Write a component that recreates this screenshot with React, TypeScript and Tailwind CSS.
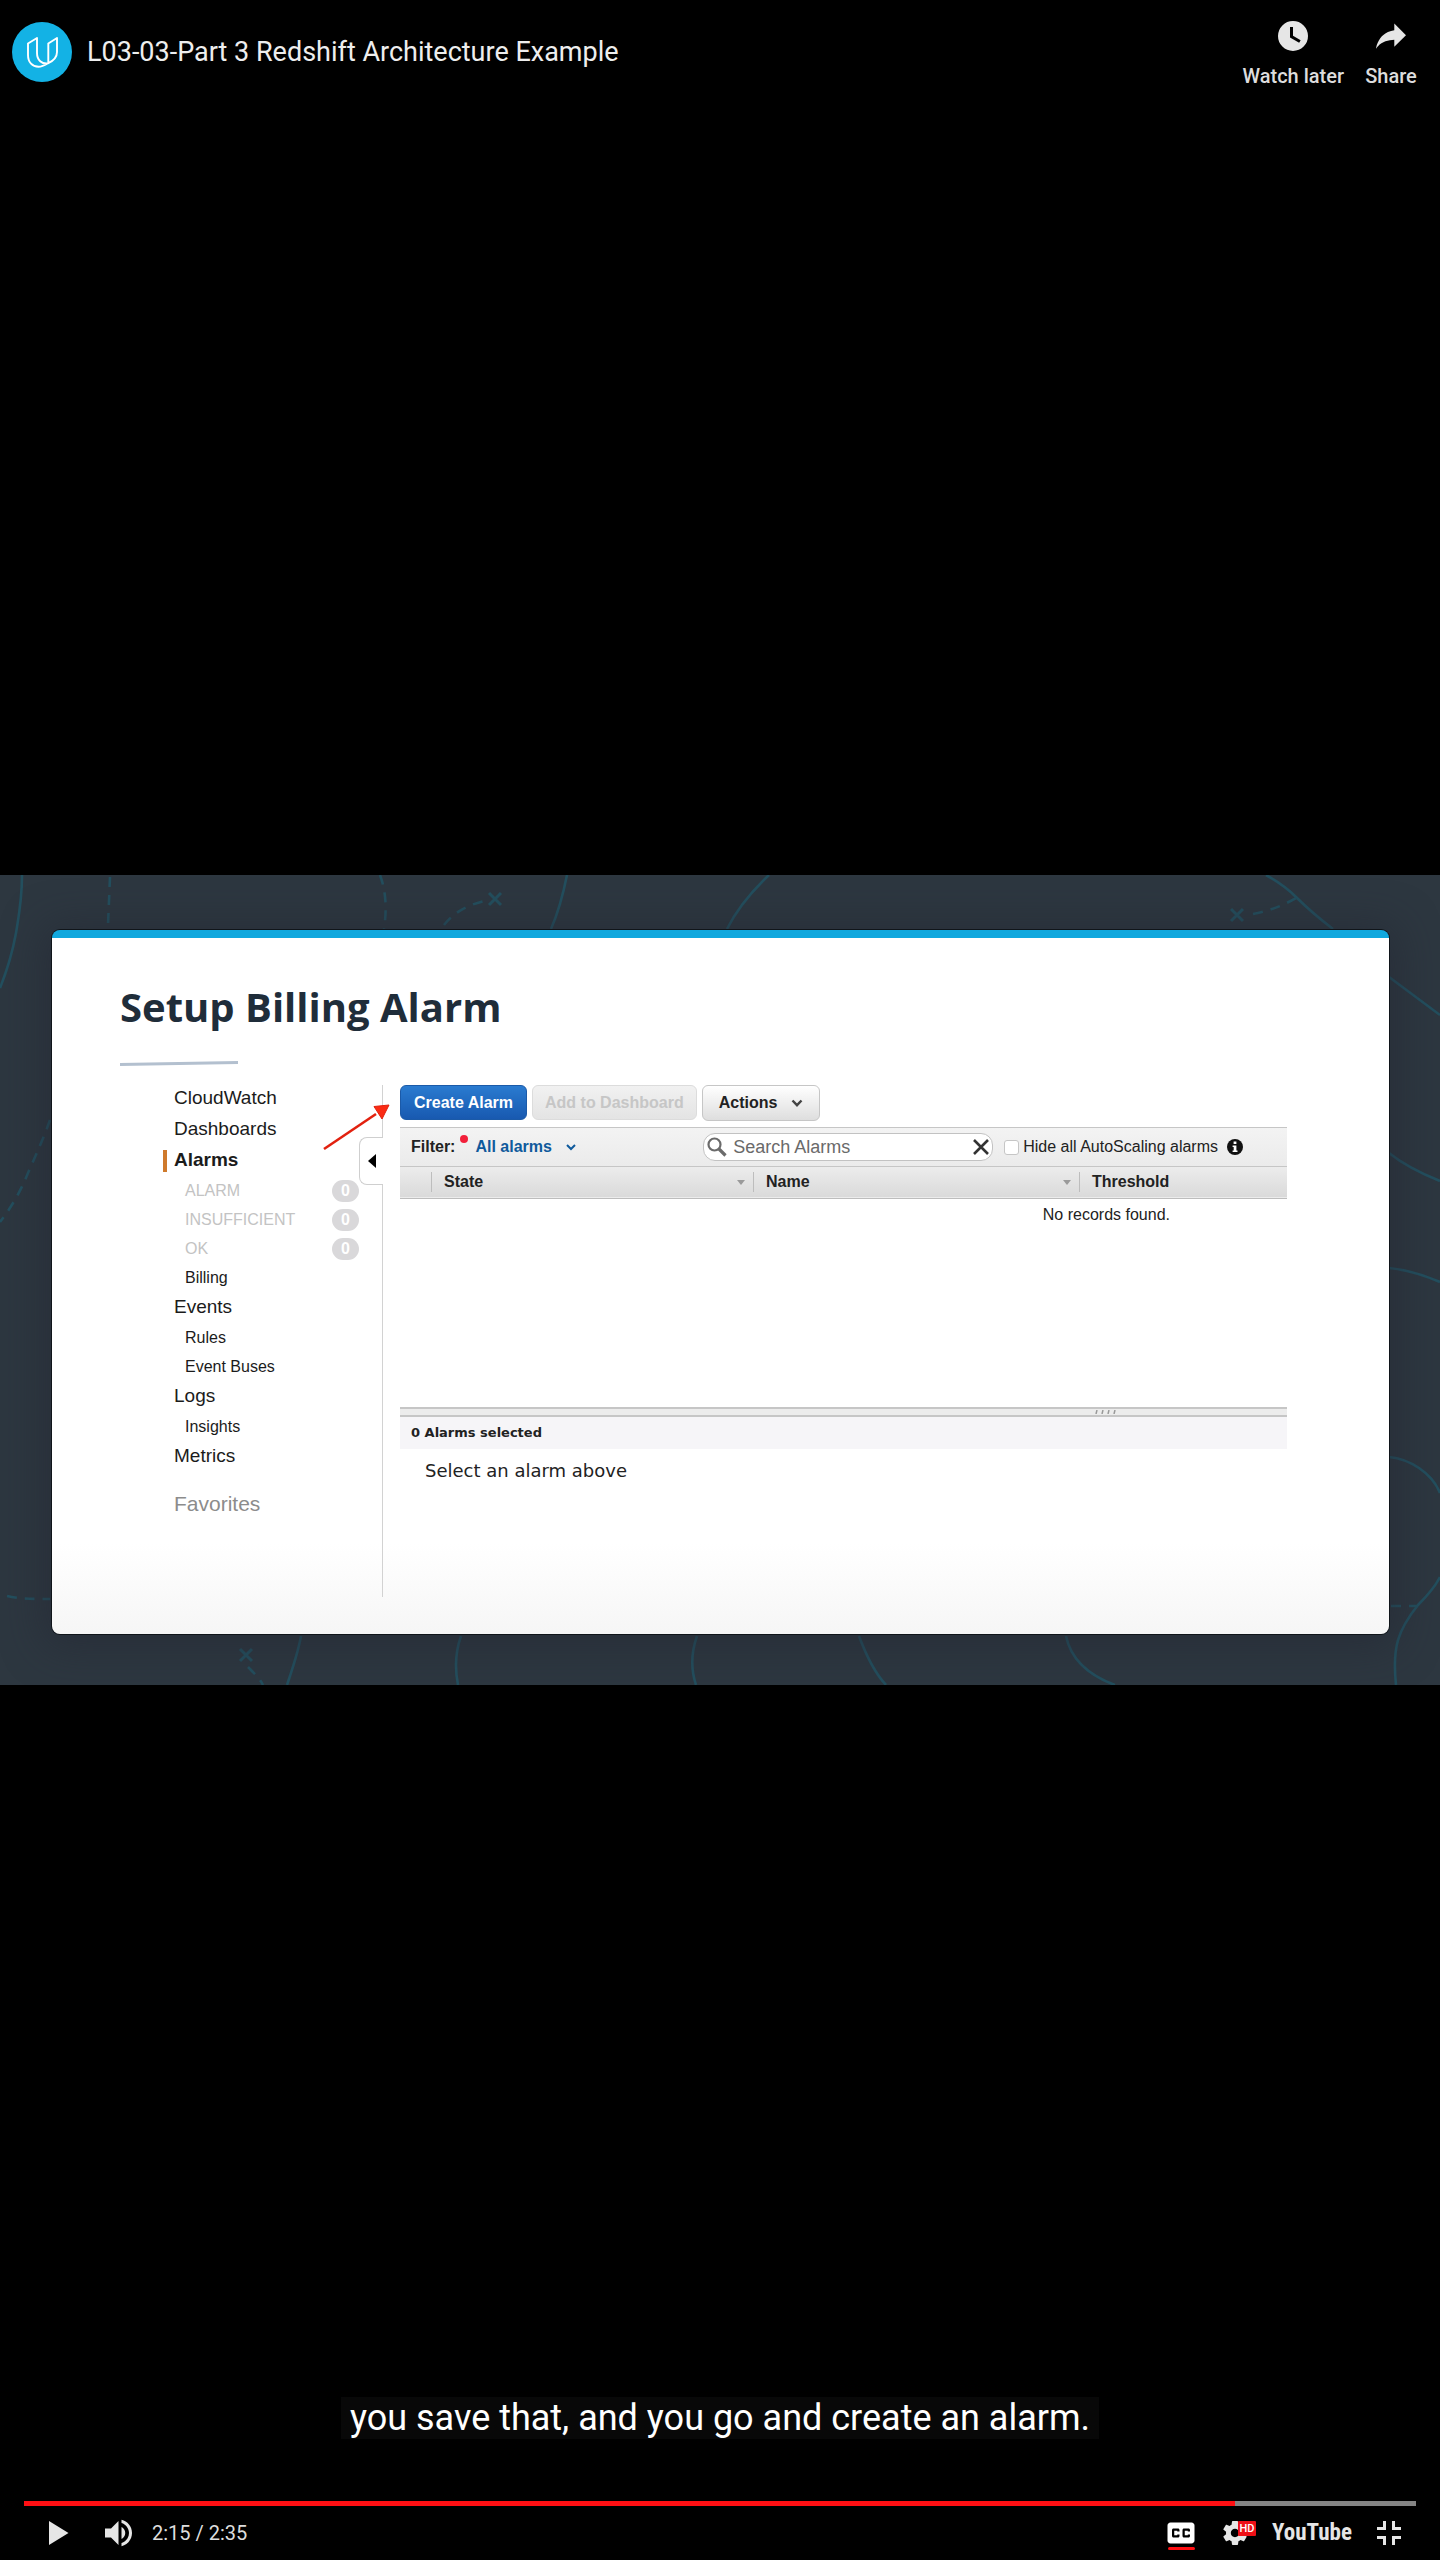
import React from "react";

type NavItem = {
  label: string;
  kind: "main" | "sub";
  active?: boolean;
  count?: number;
};

const NAV: NavItem[] = [
  { label: "CloudWatch", kind: "main" },
  { label: "Dashboards", kind: "main" },
  { label: "Alarms", kind: "main", active: true },
  { label: "ALARM", kind: "sub", count: 0 },
  { label: "INSUFFICIENT", kind: "sub", count: 0 },
  { label: "OK", kind: "sub", count: 0 },
  { label: "Billing", kind: "sub" },
  { label: "Events", kind: "main" },
  { label: "Rules", kind: "sub" },
  { label: "Event Buses", kind: "sub" },
  { label: "Logs", kind: "main" },
  { label: "Insights", kind: "sub" },
  { label: "Metrics", kind: "main" },
];

function ChannelLogo() {
  return (
    <svg viewBox="0 0 60 60" className="size-[60px]" fill="none" aria-hidden="true">
      <circle cx="30" cy="30" r="30" fill="#13b2e5" />
      <g stroke="#fff" strokeWidth="1.9" strokeLinejoin="round">
        <path d="M25 16 16 21.500V33C16 40.500 20.500 44.800 26.500 44.800C29.500 44.800 31.500 44 35.500 41.500C30 42 25 38.500 25 31Z" />
        <path d="M45 16 36.300 21.500V41.200C42 38.500 45 35.500 45 30Z" />
      </g>
    </svg>
  );
}

function PlayerIcon({ children }: { children: React.ReactNode }) {
  return (
    <svg viewBox="0 0 36 36" className="size-[54px] shrink-0" fill="#e6e6e6" fillRule="evenodd" aria-hidden="true">
      {children}
    </svg>
  );
}

function MapLines() {
  return (
    <svg
      viewBox="0 0 1440 810"
      preserveAspectRatio="none"
      className="absolute inset-0 size-full"
      fill="none"
      stroke="#234f5e"
      strokeWidth="2.600"
      aria-hidden="true"
    >
      <path d="M22 0C22 25 19 40 16 58C12 80 6 98 0 113" />
      <path d="M567 0C563 20 558 38 551 54" />
      <path d="M769 0C752 16 738 32 727 54" />
      <path d="M1266 0C1280 8 1288 14 1296 22C1310 36 1320 44 1333 54" />
      <path d="M1389 102L1440 140" />
      <path d="M1389 278C1404 290 1420 298 1440 306" />
      <path d="M1389 393C1408 395 1424 400 1440 407" />
      <path d="M301 761C298 778 292 795 287 810" />
      <path d="M461 761C455 778 455 795 458 810" />
      <path d="M697 761C691 778 691 795 696 810" />
      <path d="M859 761C866 780 874 797 886 810" />
      <path d="M1066 761C1071 785 1088 800 1115 810" />
      <path d="M1389 582C1410 584 1432 598 1440 618" />
      <path d="M1440 702C1434 714 1426 722 1418 730C1398 755 1392 772 1396 810" />
      <g strokeDasharray="10 8">
        <path d="M110 2L108 50" />
        <path d="M380 0C386 16 387 34 384 54" />
        <path d="M444 50C454 37 468 30 484 26" />
        <path d="M50 245C44 262 36 280 28 298C20 318 10 334 0 347" />
        <path d="M1253 39C1270 36 1284 30 1296 23" />
        <path d="M7 721C20 724 34 724 50 724" />
        <path d="M248 792C254 798 260 804 263 810" />
        <path d="M1391 731H1418" />
      </g>
      <g strokeWidth="3">
        <path d="M489 18l12 12M501 18l-12 12" />
        <path d="M1231 34l12 12M1243 34l-12 12" />
        <path d="M240 774l12 12M252 774l-12 12" />
      </g>
    </svg>
  );
}

function Sidebar() {
  return (
    <div className="relative flex w-[220px] shrink-0">
      <nav className="min-w-0 flex-1 text-[#1b1b1b]" aria-label="CloudWatch">
        <ul>
          {NAV.map((n) =>
            n.kind === "main" ? (
              <li key={n.label} className="flex h-[31px] items-center text-[19px]">
                <span className={n.active ? "h-[22px] w-1 bg-[#cf7a2c]" : "h-[22px] w-1"} />
                <a href="#nav" className={n.active ? "ml-[7px] font-bold" : "ml-[7px]"}>
                  {n.label}
                </a>
              </li>
            ) : (
              <li key={n.label} className="flex h-[29px] items-center justify-between pr-[23px] pl-[22px] text-[16px]">
                <a href="#nav" className={n.count === undefined ? "" : "text-[#c3c3c3]"}>
                  {n.label}
                </a>
                {n.count !== undefined && (
                  <span className="flex h-[22px] w-[27px] items-center justify-center rounded-full bg-[#d9d8da] font-bold text-white">
                    {n.count}
                  </span>
                )}
              </li>
            ),
          )}
        </ul>
        <h2 className="mt-4 ml-[11px] text-[21px] leading-[31px] text-[#8c8c8c]">Favorites</h2>
      </nav>
      <div className="mt-[2px] w-px bg-[#d2d2d2]" />
      <button
        type="button"
        aria-label="Collapse sidebar"
        className="absolute top-[54px] right-0 flex h-12 w-6 items-center justify-center rounded-l-lg border border-r-0 border-[#cfcfcf] bg-white"
      >
        <svg viewBox="0 0 8 14" className="h-3.5 w-2" aria-hidden="true">
          <path d="M8 0V14L0 7Z" fill="#000" />
        </svg>
      </button>
      <svg viewBox="0 0 68 48" className="absolute top-[20px] -right-[7px] h-12 w-[68px]" aria-hidden="true">
        <path d="M2 46L54 11" stroke="#e2210f" strokeWidth="2.600" />
        <path d="M67 2L52 3.500L60 16Z" fill="#fb2b14" stroke="#e2210f" />
      </svg>
    </div>
  );
}

function SortMark() {
  return (
    <svg viewBox="0 0 8 5" className="h-[5px] w-2" aria-hidden="true">
      <path d="M0 0H8L4 5Z" fill="#9a9a9a" />
    </svg>
  );
}

function Panel() {
  return (
    <div className="min-w-0 flex-1 pt-[2px] text-[16px] text-[#222]">
      <div className="flex items-start gap-[5px] font-bold">
        <button
          type="button"
          className="h-[35px] rounded-md border border-[#1b5aa8] bg-linear-to-b from-[#2a7bd0] to-[#1859b0] px-[13px] text-white"
        >
          Create Alarm
        </button>
        <button
          type="button"
          disabled
          className="h-[35px] rounded-md border border-[#dcdcdc] bg-linear-to-b from-[#f1f1f1] to-[#e4e4e4] px-3 text-[#c6c6c6]"
        >
          Add to Dashboard
        </button>
        <button
          type="button"
          className="flex h-9 items-center gap-3.5 rounded-md border border-[#c6c6c6] bg-linear-to-b from-white to-[#dedede] px-4"
        >
          Actions
          <svg viewBox="0 0 12 8" className="h-2 w-3" fill="none" aria-hidden="true">
            <path d="M1.500 1.500L6 6.200L10.500 1.500" stroke="#444" strokeWidth="2.400" />
          </svg>
        </button>
      </div>

      <div className="mt-[6px] flex h-10 items-center border-y border-y-[#c6c6c6] bg-linear-to-b from-[#f3f3f3] to-[#ebebeb] pl-[11px]">
        <span className="font-bold">Filter:</span>
        <span className="mb-4 ml-[5px] size-2 rounded-full bg-[#f2203a]" />
        <button type="button" className="ml-[7px] flex items-center gap-3.5 font-bold text-[#0f5a9c]">
          All alarms
          <svg viewBox="0 0 10 7" className="h-[7px] w-2.5" fill="none" aria-hidden="true">
            <path d="M1 1L5 5L9 1" stroke="#0f5a9c" strokeWidth="2" />
          </svg>
        </button>
        <div className="ml-auto flex h-7 w-[290px] items-center rounded-xl border border-[#c2c2c2] bg-white px-[3px]">
          <svg viewBox="0 0 20 20" className="size-5 shrink-0" fill="none" stroke="#6b6b6b" aria-hidden="true">
            <circle cx="7.500" cy="7.500" r="6" strokeWidth="2.200" />
            <path d="M12 12L18.500 18.500" strokeWidth="3.200" />
          </svg>
          <input
            type="text"
            aria-label="Search Alarms"
            placeholder="Search Alarms"
            className="ml-1.5 min-w-0 flex-1 bg-transparent text-[18px] outline-none placeholder:text-[#6a6a6a]"
          />
          <button type="button" aria-label="Clear search">
            <svg viewBox="0 0 16 16" className="size-4" stroke="#333" strokeWidth="2.600" aria-hidden="true">
              <path d="M1 1L15 15M15 1L1 15" />
            </svg>
          </button>
        </div>
        <label className="ml-[11px] flex items-center gap-1 whitespace-nowrap">
          <input
            type="checkbox"
            className="size-[15px] appearance-none rounded-[3px] border border-[#c6c6c6] bg-white checked:bg-[#1859b0]"
          />
          Hide all AutoScaling alarms
        </label>
        <svg viewBox="0 0 16 16" className="mr-11 ml-[9px] size-4 shrink-0" aria-hidden="true">
          <circle cx="8" cy="8" r="8" fill="#111" />
          <path d="M6.600 2.600H9.400V5H6.600ZM5.600 6.400H9.400V11.400H10.500V13H5.600V11.400H6.700V8H5.600Z" fill="#fff" />
        </svg>
      </div>

      <table className="w-full table-fixed border-collapse">
        <colgroup>
          <col className="w-[31px]" />
          <col className="w-[322px]" />
          <col className="w-[326px]" />
          <col />
        </colgroup>
        <thead>
          <tr className="h-[31px] border-b border-[#bdbdbd] bg-linear-to-b from-[#ececec] to-[#dadada] text-left leading-5">
            <th className="p-0" aria-label="Select" />
            <th className="p-0">
              <div className="flex h-5 items-center justify-between border-l border-[#bdbdbd] pr-2 pl-3">
                State
                <SortMark />
              </div>
            </th>
            <th className="p-0">
              <div className="flex h-5 items-center justify-between border-l border-[#bdbdbd] pr-2 pl-3">
                Name
                <SortMark />
              </div>
            </th>
            <th className="p-0">
              <div className="flex h-5 items-center border-l border-[#bdbdbd] pl-3">Threshold</div>
            </th>
          </tr>
        </thead>
        <tbody>
          <tr className="h-[209px] align-top">
            <td colSpan={4} className="pt-1 pr-[117px] text-right">
              No records found.
            </td>
          </tr>
        </tbody>
      </table>

      <div className="flex h-2.5 items-center justify-end border-y-2 border-[#c6c6c6] bg-[#ececec] pr-[171px]">
        <svg viewBox="0 0 21 4" className="h-1 w-[21px]" stroke="#999" strokeWidth="1.500" aria-hidden="true">
          <path d="M2 0L1 4M8 0L7 4M14 0L13 4M20 0L19 4" />
        </svg>
      </div>
      <div className="bg-[#f6f5f8] px-[11px] font-['DejaVu_Sans',sans-serif] text-[13px] leading-8 font-bold">
        0 Alarms selected
      </div>
      <p className="px-[25px] pt-2 font-['DejaVu_Sans',sans-serif] text-[18px]">Select an alarm above</p>
    </div>
  );
}

function Slide() {
  return (
    <section className="relative bg-[#2d3740] pt-[55px] pr-[51px] pb-[51px] pl-[52px]">
      <MapLines />
      <article className="relative rounded-lg border-t-8 border-[#11a8de] bg-linear-to-b from-white from-[87%] to-[#f6f6f6] pt-[41px] pr-[102px] pb-[37px] pl-[68px] font-['Liberation_Sans',Arial,sans-serif] shadow-[0_0_0_1px_#10151a,0_4px_40px_8px_rgba(36,40,52,0.6)]">
        <h1 className="font-['Open_Sans',sans-serif] text-[40px] leading-[56px] font-bold text-[#1f2d3a]">
          Setup Billing Alarm
        </h1>
        <svg viewBox="0 0 118 5" className="mt-[26px] h-[5px] w-[118px]" aria-hidden="true">
          <path d="M0 3.500L118 1.500" stroke="#b3c0cf" strokeWidth="3" />
        </svg>
        <div className="mt-[17px] ml-[43px] flex h-[514px] gap-[17px]">
          <Sidebar />
          <Panel />
        </div>
      </article>
    </section>
  );
}

function TopBar() {
  return (
    <header className="flex items-start justify-between pr-[22px] pl-3">
      <a href="#channel" className="mt-[22px] flex items-center gap-[15px] text-[#eeeeee]">
        <ChannelLogo />
        <span className="text-[27px]">L03-03-Part 3 Redshift Architecture Example</span>
      </a>
      <div className="mt-[9px] flex gap-5 text-[20px] leading-[26px] font-medium text-[#dddddd]">
        <button type="button" className="flex flex-col items-center">
          <PlayerIcon>
            <path d="M18 8a10 10 0 1 0 0 20a10 10 0 1 0 0-20ZM16 19.020V12H18V17.860L23.100 20.810L22.100 22.540Z" />
          </PlayerIcon>
          Watch later
        </button>
        <button type="button" className="flex flex-col items-center">
          <PlayerIcon>
            <path d="m20.200 14.190v-4.450l7.790 7.790-7.790 7.560v-4.560C16.270 20.690 12.100 21.810 9.340 24.760 8.800 25.130 7.600 27.290 8.120 25.650 9.080 21.320 11.800 17.180 15.980 15.380c1.330-.6 2.760-.98 4.220-1.190z" />
          </PlayerIcon>
          Share
        </button>
      </div>
    </header>
  );
}

function Controls() {
  return (
    <footer className="flex flex-col self-end">
      <p className="mb-[62px] self-center bg-[#080808] px-[9px] text-[36px] leading-[42px] text-white">
        you save that, and you go and create an alarm.
      </p>
      <div className="flex px-6">
        <input
          type="range"
          aria-label="Seek"
          min={0}
          max={155}
          defaultValue={135}
          className="h-[5px] w-full appearance-none bg-[linear-gradient(to_right,#ff0f13_87%,#848484_87%)] [&::-webkit-slider-thumb]:size-0 [&::-webkit-slider-thumb]:appearance-none"
        />
      </div>
      <div className="flex h-[54px] items-center pr-6 pl-[31px]">
        <button type="button" aria-label="Play">
          <PlayerIcon>
            <path d="M12 10L25 18L12 26Z" />
          </PlayerIcon>
        </button>
        <button type="button" aria-label="Mute" className="ml-2">
          <PlayerIcon>
            <path d="M8 21h4l5 5V10l-5 5H8ZM19 14v8c1.480-.68 2.500-2.230 2.500-4 0-1.740-1.020-3.260-2.500-4ZM19 11.290C21.890 12.150 24 14.830 24 18s-2.110 5.850-5 6.710v2.060C23.010 25.860 26 22.280 26 18s-2.990-7.860-7-8.770Z" />
          </PlayerIcon>
        </button>
        <span className="ml-[5px] text-[20px] text-[#dddddd]">2:15 / 2:35</span>
        <div className="ml-auto flex items-center">
          <button type="button" aria-label="Subtitles" className="relative">
            <svg viewBox="0 0 36 36" className="size-[54px]" fill="#fff" fillRule="evenodd" aria-hidden="true">
              <path d="M11 11c-1.110 0-2 .9-2 2v10c0 1.100.89 2 2 2h14c1.100 0 2-.9 2-2V13c0-1.100-.9-2-2-2ZM17 17h-1.500v-.5h-2v3h2V19H17v1c0 .55-.45 1-1 1h-3c-.55 0-1-.45-1-1v-4c0-.55.45-1 1-1h3c.55 0 1 .45 1 1ZM24 17h-1.500v-.5h-2v3h2V19H24v1c0 .55-.45 1-1 1h-3c-.55 0-1-.45-1-1v-4c0-.55.45-1 1-1h3c.55 0 1 .45 1 1Z" />
            </svg>
            <span className="absolute bottom-2.5 left-3.5 h-[3px] w-[27px] rounded-sm bg-[#ff0f13]" />
          </button>
          <button type="button" aria-label="Settings" className="relative">
            <PlayerIcon>
              <path d="m23.940 18.780c.03-.25.05-.51.05-.78 0-.27-.02-.52-.05-.78l1.680-1.320c.15-.12.19-.33.09-.51l-1.600-2.760c-.09-.17-.31-.24-.48-.17l-1.990.8c-.41-.32-.86-.58-1.350-.78l-.30-2.120c-.02-.19-.19-.33-.39-.33h-3.200c-.2 0-.36.14-.39.33l-.30 2.120c-.48.2-.93.47-1.350.78l-1.990-.8c-.18-.07-.39 0-.48.17l-1.600 2.760c-.10.17-.05.39.09.51l1.680 1.320c-.03.25-.05.52-.05.78 0 .26.02.52.05.78l-1.680 1.320c-.15.12-.19.33-.09.51l1.600 2.760c.09.17.31.24.48.17l1.990-.8c.41.32.86.58 1.350.78l.30 2.120c.02.19.19.33.39.33h3.200c.2 0 .36-.14.39-.33l.30-2.120c.48-.2.93-.47 1.350-.78l1.990.8c.18.07.39 0 .48-.17l1.600-2.760c.09-.17.05-.39-.09-.51zm-5.940 2.010c-1.540 0-2.800-1.250-2.800-2.800 0-1.540 1.250-2.800 2.800-2.800 1.540 0 2.800 1.250 2.800 2.800 0 1.540-1.250 2.800-2.800 2.800z" />
            </PlayerIcon>
            <span className="absolute top-[15px] left-[30px] flex h-[15px] w-[18px] items-center justify-center rounded-[1px] bg-[#ee0f16] text-[11px] leading-none font-medium text-white">
              HD
            </span>
          </button>
          <a
            href="#youtube"
            aria-label="YouTube"
            className="flex w-[100px] justify-center font-['Roboto_Condensed','Liberation_Sans_Narrow',Roboto,sans-serif] text-[23px] font-bold text-[#e6e6e6]"
          >
            YouTube
          </a>
          <button type="button" aria-label="Exit full screen">
            <PlayerIcon>
              <path d="M14 14h-4v2h6v-6h-2zM22 14v-4h-2v6h6v-2zM20 26h2v-4h4v-2h-6zM10 22h4v4h2v-6h-6z" />
            </PlayerIcon>
          </button>
        </div>
      </div>
    </footer>
  );
}

export default function App() {
  return (
    <main className="grid min-h-screen grid-rows-[1fr_auto_1fr] bg-black font-[Roboto,sans-serif]">
      <TopBar />
      <Slide />
      <Controls />
    </main>
  );
}
